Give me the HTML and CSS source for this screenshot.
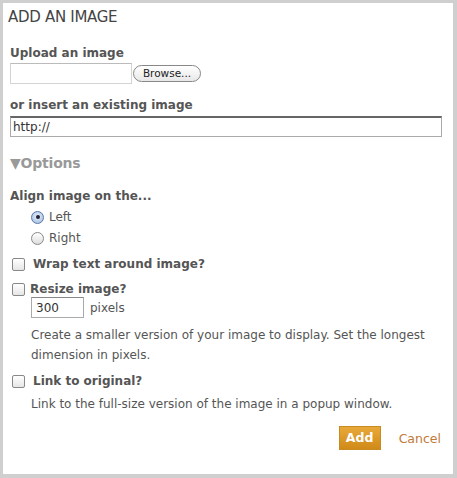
FILE: index.html
```html
<!DOCTYPE html>
<html>
<head>
<meta charset="utf-8">
<link rel="stylesheet" href="styles.css">
</head>
<body>
<div class="frame">
  <div class="dialog">
    <h1 class="title">ADD AN IMAGE</h1>
    <div class="label">Upload an image</div>
    <div class="upload-row">
      <div class="file-box"></div>
      <div class="browse">Browse...</div>
    </div>
    <div class="label label-insert">or insert an existing image</div>
    <div class="url-box">http://</div>
    <div class="options">&#9660;Options</div>
    <div class="label label-align">Align image on the...</div>
    <div class="radios">
      <div class="radio-row"><span class="radio checked"><span class="dot"></span></span><span>Left</span></div>
      <div class="radio-row"><span class="radio"></span><span>Right</span></div>
    </div>
    <div class="check-row wrap-row"><span class="check"></span><span class="check-label">Wrap text around image?</span></div>
    <div class="check-row resize-row"><span class="check"></span><span class="check-label tight">Resize image?</span></div>
    <div class="indent">
      <div class="px-row"><div class="px-box">300</div><span>pixels</span></div>
      <p class="desc">Create a smaller version of your image to display. Set the longest dimension in pixels.</p>
    </div>
    <div class="check-row link-row"><span class="check"></span><span class="check-label">Link to original?</span></div>
    <p class="desc indent link-desc">Link to the full-size version of the image in a popup window.</p>
    <div class="actions">
      <span class="add">Add</span>
      <span class="cancel">Cancel</span>
    </div>
  </div>
</div>
</body>
</html>
```
FILE: styles.css
```css
* { box-sizing: border-box; }
html, body { margin: 0; padding: 0; }
body {
  width: 457px;
  height: 478px;
  background: #cfcfcf;
  font-family: "DejaVu Sans", Verdana, sans-serif;
  color: #555;
  overflow: hidden;
}
.frame {
  padding: 3px 4px 4px 3px;
  height: 478px;
}
.dialog {
  background: #fff;
  height: 471px;
  padding: 0 0 0 7px;
  display: flex;
  flex-direction: column;
}
.title {
  margin: 5px 0 0 -2px;
  font-size: 15px;
  font-weight: normal;
  color: #444;
  letter-spacing: -0.3px;
  line-height: 18px;
  height: 18px;
}
.label {
  font-weight: bold;
  font-size: 12px;
  color: #555;
  line-height: 15px;
  margin-top: 20px;
}
.upload-row {
  display: flex;
  align-items: center;
  margin-top: 2px;
  gap: 1px;
}
.file-box {
  width: 122px;
  height: 21px;
  border: 1px solid #d4d4d4;
  border-top-color: #bbb;
}
.browse {
  width: 68px;
  height: 17px;
  border: 1px solid #888;
  border-radius: 9px;
  background: linear-gradient(#fff, #e8e8e8);
  font-size: 10.5px;
  color: #222;
  text-align: center;
  line-height: 15px;
}
.label-insert { margin-top: 14px; }
.url-box {
  margin-top: 3px;
  width: 432px;
  height: 21px;
  border: 1px solid #aaa;
  border-top: 2px solid #666;
  font-size: 12px;
  color: #333;
  padding: 1px 0 0 2px;
  line-height: 16px;
}
.options {
  margin-top: 18px;
  font-size: 14px;
  font-weight: bold;
  color: #999;
  line-height: 17px;
  letter-spacing: -0.2px;
}
.label-align { margin-top: 17px; }
.radios {
  margin-top: 5px;
  padding-left: 21px;
  display: flex;
  flex-direction: column;
  gap: 5px;
}
.radio-row {
  display: flex;
  align-items: center;
  gap: 5px;
  font-size: 12px;
  line-height: 16px;
}
.radio {
  width: 13px;
  height: 13px;
  border-radius: 50%;
  border: 1px solid #888;
  background: linear-gradient(#fff, #ddd);
  display: flex;
  align-items: center;
  justify-content: center;
}
.radio.checked {
  border-color: #5a77a8;
  background: radial-gradient(circle at 50% 40%, #e8f0fb, #9bb8e0);
}
.dot {
  width: 4px;
  height: 4px;
  border-radius: 50%;
  background: #223;
}
.check-row {
  display: flex;
  align-items: center;
  font-size: 12px;
  line-height: 15px;
  padding-left: 2px;
}
.check {
  width: 13px;
  height: 13px;
  border: 1px solid #888;
  border-radius: 2px;
  background: linear-gradient(#fff, #e6e6e6);
}
.check-label {
  font-weight: bold;
  margin-left: 8px;
}
.check-label.tight { margin-left: 5px; }
.wrap-row { margin-top: 11px; }
.resize-row { margin-top: 10px; }
.indent { padding-left: 21px; }
.px-row {
  display: flex;
  align-items: center;
  gap: 6px;
  font-size: 12px;
  margin-top: 0;
}
.px-box {
  width: 53px;
  height: 21px;
  border: 1px solid #aaa;
  border-top-color: #888;
  font-size: 12px;
  color: #333;
  padding: 2px 0 0 4px;
  line-height: 16px;
}
.desc {
  margin: 0;
  font-size: 12px;
  line-height: 20px;
  color: #555;
}
.indent .desc { margin-top: 7px; width: 425px; }
.link-row { margin-top: 9px; }
.link-desc { margin-top: 5px; }
.actions {
  margin-top: 12px;
  display: flex;
  align-items: center;
  justify-content: flex-end;
  padding-right: 12px;
  gap: 18px;
  font-size: 12.5px;
}
.add {
  width: 42px;
  height: 24px;
  background: linear-gradient(#e8a93a, #d08a18);
  border: 1px solid #c98a20;
  color: #fff;
  font-weight: bold;
  text-align: center;
  line-height: 22px;
}
.cancel {
  color: #c07a3a;
}
```
